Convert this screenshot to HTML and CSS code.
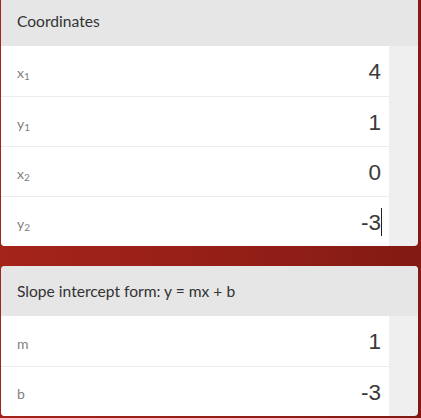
FILE: index.html
```html
<!DOCTYPE html>
<html>
<head>
<meta charset="utf-8">
<link rel="stylesheet" href="styles.css">
</head>
<body>
<div class="page">
  <section class="card first">
    <div class="card-head">Coordinates</div>
    <div class="row"><div class="cell"><span class="label">x<sub>1</sub></span><span class="value">4</span></div></div>
    <div class="row"><div class="cell"><span class="label">y<sub>1</sub></span><span class="value">1</span></div></div>
    <div class="row"><div class="cell"><span class="label">x<sub>2</sub></span><span class="value">0</span></div></div>
    <div class="row"><div class="cell"><span class="label">y<sub>2</sub></span><span class="value">-3<span class="caret"></span></span></div></div>
  </section>
  <section class="card">
    <div class="card-head">Slope intercept form: y = mx + b</div>
    <div class="row"><div class="cell"><span class="label">m</span><span class="value">1</span></div></div>
    <div class="row"><div class="cell"><span class="label">b</span><span class="value">-3</span></div></div>
  </section>
</div>
</body>
</html>
```
FILE: styles.css
```css
html, body {
  margin: 0;
  padding: 0;
  height: 100%;
}
body {
  background: linear-gradient(100deg, #a7241a 0%, #982018 45%, #8c1d15 75%, #7e1a12 100%);
  overflow: hidden;
}
.page {
  display: flex;
  flex-direction: column;
  gap: 20px;
  padding: 0 3px 0 1px;
  margin-top: -4px;
}
.card {
  background: #efefef;
  border-radius: 4px;
  overflow: hidden;
}
.card-head {
  height: 50px;
  line-height: 50px;
  background: #e6e6e6;
  padding-left: 16px;
  font-family: Lato, "Open Sans", sans-serif;
  font-size: 15.6px;
  color: #333;
}
.row {
  height: 50px;
  display: flex;
}
.cell {
  width: 388px;
  background: #fff;
  display: flex;
  align-items: center;
  justify-content: space-between;
  padding: 0 8px 0 16px;
  box-sizing: border-box;
  border-top: 1px solid #ececec;
}
.row:nth-child(2) .cell {
  border-top: none;
}
.label {
  font-family: Lato, "Liberation Sans", sans-serif;
  font-size: 14px;
  color: #808080;
  padding-top: 4px;
}
.label sub {
  font-size: 10px;
  vertical-align: -2px;
}
.value {
  font-family: "Liberation Sans", Arial, sans-serif;
  font-size: 22.5px;
  color: #3a3a3a;
  position: relative;
  padding-top: 2px;
}
.caret {
  position: absolute;
  right: -1px;
  top: 0px;
  width: 1px;
  height: 28px;
  background: #222;
}
```
